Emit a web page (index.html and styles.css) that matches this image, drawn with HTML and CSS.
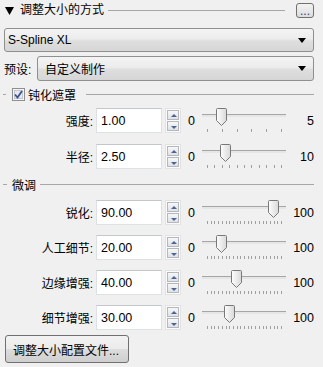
FILE: index.html
```html
<!DOCTYPE html>
<html lang="zh-CN">
<head>
  <meta charset="UTF-8" />
  <title>调整大小</title>
  <link rel="stylesheet" href="styles.css">
</head>
<body>
  <div class="panel">
    <div class="group-head">
      <svg class="tri" width="9" height="9" viewBox="0 0 9 9"><path d="M0 1 H9 L4.5 9 Z" fill="#000"/></svg>
      <span class="title">调整大小的方式</span>
      <span class="rule"></span>
      <button class="dots">...</button>
    </div>

    <div class="select first">
      <span class="select-text">S-Spline XL</span>
      <svg class="arrow" width="8" height="5" viewBox="0 0 8 5"><path d="M0 0 H8 L4 5 Z" fill="#000"/></svg>
    </div>

    <div class="preset">
      <span class="preset-label">预设:</span>
      <div class="select grow">
        <span class="select-text">自定义制作</span>
        <svg class="arrow" width="8" height="5" viewBox="0 0 8 5"><path d="M0 0 H8 L4 5 Z" fill="#000"/></svg>
      </div>
    </div>

    <div class="sub-head mask-head">
      <span class="dash"></span>
      <span class="check">
        <svg width="13" height="13" viewBox="0 0 13 13">
          <rect x="0.5" y="0.5" width="12" height="12" fill="#f4f4f4" stroke="#8e8f8f"/>
          <rect x="2.5" y="2.5" width="8" height="8" fill="#e6e8ee" stroke="#c2c6cf"/>
          <path d="M3 6.5 L5.5 9.5 L10 3" fill="none" stroke="#3c5394" stroke-width="1.8"/>
        </svg>
      </span>
      <span class="sub-title">钝化遮罩</span>
      <span class="rule"></span>
    </div>

    <div id="maskRows"></div>

    <div class="sub-head fine-head">
      <span class="dash wide"></span>
      <span class="sub-title">微调</span>
      <span class="rule"></span>
    </div>

    <div id="fineRows"></div>

    <button class="profile">调整大小配置文件...</button>
  </div>

  <script>
    const maskRows = [
      { label: '强度:', value: '1.00', max: 5, ticks: 6 },
      { label: '半径:', value: '2.50', max: 10, ticks: 11 }
    ];
    const fineRows = [
      { label: '锐化:', value: '90.00', max: 100, ticks: 21 },
      { label: '人工细节:', value: '20.00', max: 100, ticks: 21 },
      { label: '边缘增强:', value: '40.00', max: 100, ticks: 21 },
      { label: '细节增强:', value: '30.00', max: 100, ticks: 21 }
    ];

    const thumbSvg =
      '<svg class="thumb" width="11" height="18" viewBox="0 0 11 18">' +
      '<defs><linearGradient id="tg" x1="0" x2="1"><stop offset="0" stop-color="#fdfdfd"/><stop offset="1" stop-color="#d9d9d9"/></linearGradient></defs>' +
      '<path d="M1.5 0.5 H9.5 Q10.5 0.5 10.5 1.5 V12.5 L5.5 17.5 L0.5 12.5 V1.5 Q0.5 0.5 1.5 0.5 Z" fill="url(#tg)" stroke="#787878"/></svg>';

    function buildRow(r) {
      const row = document.createElement('div');
      row.className = 'row';

      const span = 74;
      let ticks = '';
      for (let i = 0; i < r.ticks; i++) {
        const x = Math.round(5 + i * span / (r.ticks - 1));
        ticks += '<i class="tick" style="left:' + x + 'px"></i>';
      }
      const center = 5 + parseFloat(r.value) / r.max * span;

      row.innerHTML =
        '<span class="label">' + r.label + '</span>' +
        '<span class="field">' + r.value + '</span>' +
        '<span class="spin"><span class="spin-btn up"></span><span class="spin-btn down"></span></span>' +
        '<span class="min">0</span>' +
        '<span class="slider"><span class="track"></span>' + ticks +
        '<span class="thumb-wrap" style="left:' + Math.round(center - 5.5) + 'px">' + thumbSvg + '</span></span>' +
        '<span class="max">' + r.max + '</span>';
      return row;
    }

    maskRows.forEach(r => document.getElementById('maskRows').appendChild(buildRow(r)));
    fineRows.forEach(r => document.getElementById('fineRows').appendChild(buildRow(r)));
  </script>
</body>
</html>
```

FILE: styles.css
```css
body {
  margin: 0;
  background-color: #f0f0f0;
  color: #000;
  font-family: "Liberation Sans", "Noto Sans CJK SC", sans-serif;
  font-size: 12px;
}
.panel {
  padding: 3px 9px 0 4px;
}
.group-head {
  display: flex;
  align-items: center;
  height: 15px;
}
.tri {
  margin-left: 1px;
  margin-right: 6px;
}
.title {
  line-height: 15px;
}
.rule {
  flex: 1;
  height: 1px;
  background-color: #a7a7a7;
}
.group-head .rule {
  margin: 0 11px 0 4px;
}
.dots {
  width: 18px;
  height: 15px;
  padding: 0;
  border: 1px solid #707070;
  border-radius: 3px;
  background: linear-gradient(#f3f3f3, #dcdcdc);
  font: 12px "Liberation Sans", sans-serif;
  line-height: 10px;
  color: #1f3a8a;
}
.select {
  display: flex;
  align-items: center;
  box-sizing: border-box;
  height: 24px;
  padding: 0 7px 0 3px;
  border: 1px solid #8e8f8f;
  border-radius: 3px;
  background: linear-gradient(#f4f4f4 0%, #ececec 45%, #dedede 55%, #d6d6d6 100%);
}
.select.first {
  margin-top: 10px;
}
.select-text {
  flex: 1;
}
.preset {
  display: flex;
  align-items: center;
  margin-top: 4px;
  height: 25px;
}
.preset-label {
  width: 33px;
}
.select.grow {
  flex: 1;
  height: 25px;
  padding-left: 7px;
}
.sub-head {
  display: flex;
  align-items: center;
  height: 14px;
}
.mask-head {
  margin-top: 6px;
}
.fine-head {
  margin-top: 8px;
}
.dash {
  width: 3px;
  height: 1px;
  margin-left: -1px;
  background-color: #a7a7a7;
}
.dash.wide {
  width: 4px;
  margin-right: 5px;
}
.check {
  display: flex;
  margin-left: 6px;
  margin-right: 3px;
}
.sub-title {
  margin-right: 4px;
}
.mask-head .sub-title {
  margin-right: 10px;
}
.row {
  display: flex;
  align-items: center;
  height: 25px;
  margin-top: 10px;
}
#maskRows .row:first-child {
  margin-top: 7px;
}
#maskRows .row + .row {
  margin-top: 11px;
}
#fineRows .row:first-child {
  margin-top: 9px;
}
.label {
  width: 89px;
  margin-right: 3px;
  text-align: right;
}
.field {
  box-sizing: border-box;
  width: 66px;
  height: 25px;
  padding: 5px 0 0 4px;
  background-color: #fff;
  border: 1px solid #dde1e6;
  border-top-color: #c3c7cd;
  font-size: 12.5px;
}
.spin {
  display: flex;
  flex-direction: column;
  gap: 1px;
  box-sizing: border-box;
  width: 16px;
  height: 25px;
  margin-left: 3px;
  padding: 1px;
  background-color: #fbfbfb;
  border: 1px solid #e2e2e2;
}
.spin-btn {
  position: relative;
  flex: 1;
  border: 1px solid #b4b7bd;
  background: linear-gradient(#f7f7f7, #dfe1e6);
}
.spin-btn::after {
  content: "";
  position: absolute;
  left: 3px;
  top: 3px;
  border-left: 3px solid transparent;
  border-right: 3px solid transparent;
}
.spin-btn.up::after {
  border-bottom: 3px solid #4d6391;
}
.spin-btn.down::after {
  top: 4px;
  border-top: 3px solid #4d6391;
}
.min {
  width: 7px;
  margin-left: 7px;
  font-size: 12.5px;
}
.slider {
  position: relative;
  width: 84px;
  height: 25px;
  margin-left: 7px;
}
.track {
  position: absolute;
  left: 0;
  right: 0;
  top: 6px;
  height: 2px;
  border-top: 1px solid #a6a6a6;
  background-color: #e6e6e6;
}
.tick {
  position: absolute;
  top: 21px;
  width: 1px;
  height: 3px;
  background-color: #a0a0a0;
}
.thumb-wrap {
  position: absolute;
  top: 0;
  display: flex;
}
.max {
  flex: 1;
  text-align: right;
  font-size: 12.5px;
}
.profile {
  display: block;
  margin: 5px 0 0 1px;
  width: 124px;
  height: 28px;
  padding: 0 0 0 7px;
  text-align: left;
  border: 1px solid #707070;
  border-radius: 3px;
  background: linear-gradient(#f2f2f2 0%, #ebebeb 50%, #dddddd 50%, #cfcfcf 100%);
  font-family: "Liberation Sans", "Noto Sans CJK SC", sans-serif;
  font-size: 12px;
  color: #000;
}
```
